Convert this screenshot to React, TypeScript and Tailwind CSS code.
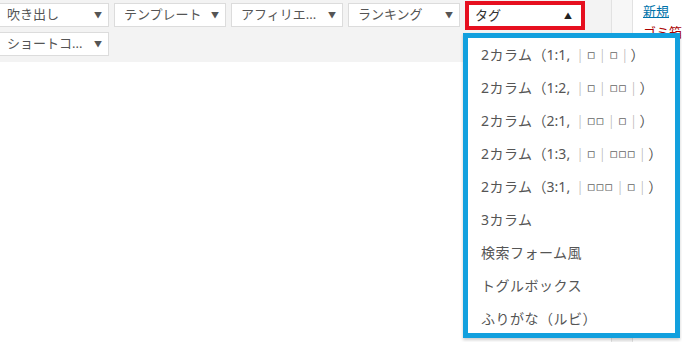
import React from 'react';

const FONT = "font-['Noto_Sans','Noto_Sans_CJK_JP',sans-serif]";

const COLS: { label: string; ratio?: string; cells?: number[] }[] = [
  { label: '2カラム', ratio: '1:1', cells: [1, 1] },
  { label: '2カラム', ratio: '1:2', cells: [1, 2] },
  { label: '2カラム', ratio: '2:1', cells: [2, 1] },
  { label: '2カラム', ratio: '1:3', cells: [1, 3] },
  { label: '2カラム', ratio: '3:1', cells: [3, 1] },
  { label: '3カラム' },
  { label: '検索フォーム風' },
  { label: 'トグルボックス' },
  { label: 'ふりがな（ルビ）' },
];

function Select({ label }: { label: string }) {
  return (
    <div className="h-[24px] w-[112px] bg-white border border-[#dcdcdc] flex items-center justify-between pl-[9px] pr-[6px] text-[13px] text-[#555]">
      <span>{label}</span>
      <span className="text-[8px] text-[#555]">▼</span>
    </div>
  );
}

function Item({ label, ratio, cells }: { label: string; ratio?: string; cells?: number[] }) {
  return (
    <div className="h-[33px] flex items-center pl-[13px] text-[14px] text-[#555] whitespace-nowrap">
      <span className="tracking-[0.5px]">{label}</span>
      {ratio && cells && (
        <>
          <span>（{ratio}, </span>
          <span className="ml-[6px] text-[#b5b5b5] font-light">|</span>
          {cells.map((n, i) => (
            <React.Fragment key={i}>
              <span className="px-[3px] text-[13px] font-['DejaVu_Sans',sans-serif] text-[#666]">{'▫'.repeat(n)}</span>
              <span className="text-[#b5b5b5] font-light">|</span>
            </React.Fragment>
          ))}
          <span className="ml-[2px]">）</span>
        </>
      )}
    </div>
  );
}

export default function App() {
  return (
    <div className={`relative w-[682px] h-[342px] overflow-hidden bg-white flex ${FONT}`}>
      {/* editor */}
      <div className="w-[622px] flex flex-col border-r border-[#e2e2e2]">
        <div className="h-[62px] bg-[#f3f3f3] pt-[3px]">
          <div className="-ml-[3px] flex flex-wrap gap-x-[5px] gap-y-[5px] items-start">
            <Select label="吹き出し" />
            <Select label="テンプレート" />
            <Select label="アフィリエ..." />
            <Select label="ランキング" />
            <div className="-mt-[2px] -mb-[3px] h-[29px] w-[120px] bg-white border-4 border-[#e60f1f] flex items-center justify-between pl-[6px] pr-[9px] text-[13px] text-[#333]">
              <span>タグ</span>
              <span className="text-[8px] text-[#222]">▲</span>
            </div>
            <Select label="ショートコ..." />
          </div>
        </div>
        <div className="flex-1 bg-white" />
      </div>
      {/* sidebar strip */}
      <div className="w-[21px] bg-[#f7f7f7] border-r border-[#e2e2e2]" />
      <div className="flex-1 bg-white pl-[10px] pt-[2px] text-[13px] leading-[18px]">
        <div className="text-[#0073aa] underline whitespace-nowrap">新規</div>
        <div className="text-[#a00] mt-[3px] whitespace-nowrap">ゴミ箱</div>
      </div>

      {/* dropdown */}
      <div className="absolute left-[463px] top-[33px] w-[217px] h-[305px] bg-white border-[5px] border-[#12a0de] shadow-[0_2px_3px_rgba(0,0,0,0.2)]">
        {COLS.map((c, i) => (
          <Item key={i} {...c} />
        ))}
      </div>
    </div>
  );
}
